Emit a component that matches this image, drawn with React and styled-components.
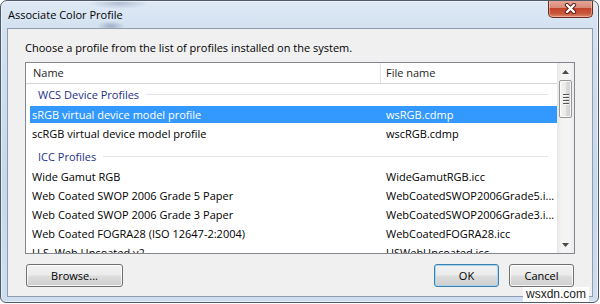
import React from 'react';
import styled, { createGlobalStyle } from 'styled-components';

const GlobalStyle = createGlobalStyle`
  html, body {
    margin: 0;
    padding: 0;
    background: #ffffff;
  }
  body {
    font-family: "Open Sans", "Noto Sans", sans-serif;
    font-size: 11px;
    color: #000;
  }
`;

const groups = [
  {
    title: 'WCS Device Profiles',
    rows: [
      { name: 'sRGB virtual device model profile', file: 'wsRGB.cdmp', selected: true },
      { name: 'scRGB virtual device model profile', file: 'wscRGB.cdmp' },
    ],
  },
  {
    title: 'ICC Profiles',
    rows: [
      { name: 'Wide Gamut RGB', file: 'WideGamutRGB.icc' },
      { name: 'Web Coated SWOP 2006 Grade 5 Paper', file: 'WebCoatedSWOP2006Grade5.i...' },
      { name: 'Web Coated SWOP 2006 Grade 3 Paper', file: 'WebCoatedSWOP2006Grade3.i...' },
      { name: 'Web Coated FOGRA28 (ISO 12647-2:2004)', file: 'WebCoatedFOGRA28.icc' },
      { name: 'U.S. Web Uncoated v2', file: 'USWebUncoated.icc' },
    ],
  },
];

const CloseGlyph = () => (
  <svg width="13" height="11" viewBox="0 0 13 11">
    <path d="M3 2 L10 9 M10 2 L3 9" stroke="#5a1c12" strokeWidth="4.2" strokeLinecap="round" />
    <path d="M3 2 L10 9 M10 2 L3 9" stroke="#ffffff" strokeWidth="2.4" strokeLinecap="round" />
  </svg>
);

const Arrow = ({ down }) => (
  <svg width="7" height="4" viewBox="0 0 7 4">
    <path d={down ? 'M0 0 L7 0 L3.5 4 Z' : 'M0 4 L7 4 L3.5 0 Z'} fill="#4a4a4a" />
  </svg>
);

const App = () => {
  return (
    <>
      <GlobalStyle />
      <Window>
        <TitleBar>
          <Title>Associate Color Profile</Title>
          <CloseButton>
            <CloseGlyph />
          </CloseButton>
        </TitleBar>
        <Client>
          <Instruction>Choose a profile from the list of profiles installed on the system.</Instruction>
          <ListBox>
            <ListContent>
              <Header>
                <HeaderCell $first>Name</HeaderCell>
                <HeaderCell>File name</HeaderCell>
              </Header>
              {groups.map((g, i) => (
                <React.Fragment key={g.title}>
                  <Group $spaced={i > 0}>
                    <GroupTitle>{g.title}</GroupTitle>
                    <GroupLine />
                  </Group>
                  {g.rows.map((r) => (
                    <Row key={r.name} $selected={r.selected}>
                      <Cell $first>{r.name}</Cell>
                      <Cell>{r.file}</Cell>
                    </Row>
                  ))}
                </React.Fragment>
              ))}
            </ListContent>
            <ScrollBar>
              <ScrollArrow>
                <Arrow />
              </ScrollArrow>
              <Track>
                <Thumb>
                  <Grip />
                </Thumb>
              </Track>
              <ScrollArrow>
                <Arrow down />
              </ScrollArrow>
            </ScrollBar>
          </ListBox>
          <Buttons>
            <Button $width={97}>Browse...</Button>
            <Spacer />
            <Button $width={65} $default>OK</Button>
            <Button $width={65}>Cancel</Button>
          </Buttons>
        </Client>
        <Watermark>wsxdn.com</Watermark>
      </Window>
    </>
  );
};

export default App;

const Window = styled.div`
  position: relative;
  box-sizing: border-box;
  width: 599px;
  height: 303px;
  display: flex;
  flex-direction: column;
  padding: 0 5px 5px 6px;
  border: 1px solid #4f5a68;
  border-radius: 7px 7px 6px 6px;
  background:
    radial-gradient(ellipse 30px 6px at 118px 2px, rgba(90, 110, 140, 0.35), transparent),
    radial-gradient(ellipse 14px 5px at 110px 25px, rgba(60, 80, 120, 0.35), transparent),
    linear-gradient(to bottom, #dfe9f5 0px, #d3e1f0 28px, #c7d8eb 60%, #cfdeef 100%);
  box-shadow: inset 0 0 0 1px rgba(255, 255, 255, 0.5);
  overflow: hidden;
`;

const TitleBar = styled.div`
  height: 27px;
  display: flex;
  align-items: flex-start;
  justify-content: space-between;
`;

const Title = styled.div`
  padding-left: 1px;
  line-height: 27px;
  font-size: 11px;
  color: #000;
`;

const CloseButton = styled.div`
  box-sizing: border-box;
  width: 45px;
  height: 18px;
  margin-top: -1px;
  display: flex;
  align-items: center;
  justify-content: center;
  border: 1px solid #6e2a1e;
  border-top: none;
  border-radius: 0 0 5px 5px;
  background: linear-gradient(to bottom, #e8a99a 0%, #d98a76 45%, #c2442b 50%, #c9573d 80%, #dc8a70 100%);
  box-shadow: inset 0 0 0 1px rgba(255, 220, 210, 0.45);
`;

const Client = styled.div`
  flex: 1;
  display: flex;
  flex-direction: column;
  padding: 11px 17px 0 17px;
  border: 1px solid #8d9cae;
  background: #f0f0f0;
`;

const Instruction = styled.div`
  line-height: 16px;
  margin-bottom: 6px;
`;

const ListBox = styled.div`
  box-sizing: border-box;
  height: 192px;
  display: flex;
  border: 1px solid #828790;
  background: #ffffff;
`;

const ListContent = styled.div`
  flex: 1;
  overflow: hidden;
`;

const Header = styled.div`
  display: flex;
  height: 20px;
  border-bottom: 1px solid #d5d5d5;
`;

const HeaderCell = styled.div`
  box-sizing: border-box;
  width: ${(p) => (p.$first ? '355px' : 'auto')};
  flex: ${(p) => (p.$first ? 'none' : '1')};
  padding-left: ${(p) => (p.$first ? '7px' : '5px')};
  line-height: 20px;
  border-right: ${(p) => (p.$first ? '1px solid #e3e3e3' : 'none')};
  color: #1e1e1e;
`;

const Group = styled.div`
  display: flex;
  align-items: center;
  height: 21px;
  margin-top: ${(p) => (p.$spaced ? '3px' : '0')};
  padding: 0 9px 0 12px;
`;

const GroupTitle = styled.span`
  color: #1e3287;
  white-space: nowrap;
`;

const GroupLine = styled.div`
  flex: 1;
  height: 1px;
  margin-left: 7px;
  background: #e0e5eb;
`;

const Row = styled.div`
  display: grid;
  grid-template-columns: 350px 1fr;
  height: 17px;
  padding: 1px 0;
  margin-left: 4px;
  line-height: 17px;
  white-space: nowrap;
  background: ${(p) => (p.$selected ? '#3399ff' : 'transparent')};
  background-clip: content-box;
  color: ${(p) => (p.$selected ? '#ffffff' : '#000000')};
`;

const Cell = styled.div`
  padding-left: ${(p) => (p.$first ? '2px' : '6px')};
  overflow: hidden;
`;

const ScrollBar = styled.div`
  width: 17px;
  display: flex;
  flex-direction: column;
  background: linear-gradient(to right, #e6e6e6 0%, #f4f4f4 25%, #f4f4f4 75%, #ebebeb 100%);
`;

const ScrollArrow = styled.div`
  height: 17px;
  display: flex;
  align-items: center;
  justify-content: center;
`;

const Track = styled.div`
  flex: 1;
`;

const Thumb = styled.div`
  box-sizing: border-box;
  height: 38px;
  margin: 0 2px;
  display: flex;
  align-items: center;
  justify-content: center;
  border: 1px solid #979797;
  border-radius: 2px;
  background: linear-gradient(to right, #f4f4f4 0%, #ebebeb 50%, #dcdcdc 51%, #d0d0d0 100%);
  box-shadow: inset 0 0 0 1px rgba(255, 255, 255, 0.75);
`;

const Grip = styled.div`
  width: 6px;
  height: 11px;
  background: repeating-linear-gradient(to bottom, #555 0px, #555 1px, #f6f6f6 1px, #f6f6f6 2px, transparent 2px, transparent 3px);
`;

const Buttons = styled.div`
  display: flex;
  gap: 10px;
  margin-top: 10px;
  padding: 0 1px;
`;

const Spacer = styled.div`
  flex: 1;
`;

const Button = styled.div`
  box-sizing: border-box;
  width: ${(p) => p.$width}px;
  height: 23px;
  display: flex;
  align-items: center;
  justify-content: center;
  border: 1px solid ${(p) => (p.$default ? '#3c7fb1' : '#707070')};
  border-radius: 3px;
  background: linear-gradient(to bottom, #f2f2f2 0%, #ebebeb 48%, #dddddd 52%, #cfcfcf 100%);
  box-shadow: inset 0 0 0 1px ${(p) => (p.$default ? '#a7d6f3' : 'rgba(255, 255, 255, 0.8)')};
  color: #000;
`;

const Watermark = styled.div`
  position: absolute;
  right: 9px;
  bottom: 0;
  padding: 0 3px;
  background: #ffffff;
  font-family: "Liberation Sans", Arial, sans-serif;
  font-size: 12px;
  line-height: 15px;
  color: #222;
`;
